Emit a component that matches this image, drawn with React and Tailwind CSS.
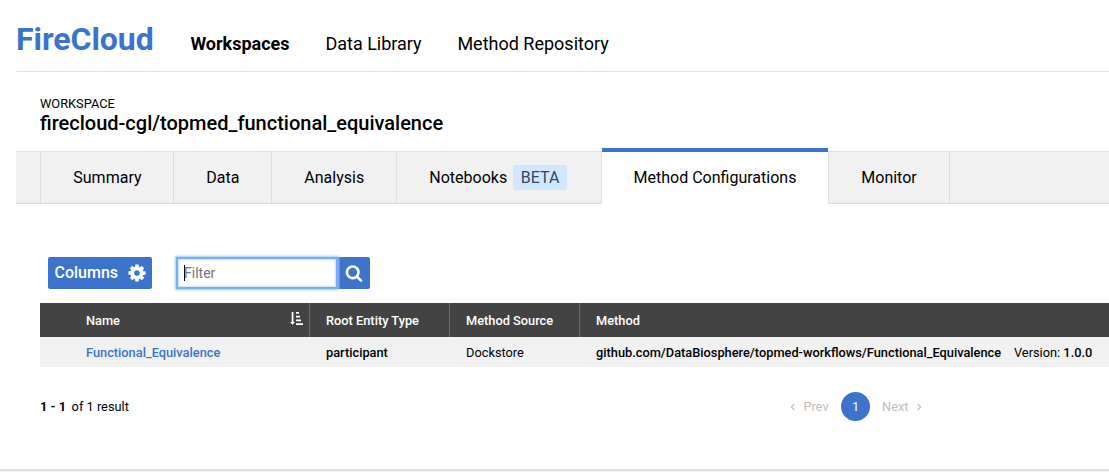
const tabs = [
  { label: "Summary", width: "w-[133px]" },
  { label: "Data", width: "w-[98px]" },
  { label: "Analysis", width: "w-[125px]" },
  { label: "Notebooks", width: "w-[205px]", beta: true },
  { label: "Method Configurations", width: "w-[226px]", active: true },
  { label: "Monitor", width: "w-[122px] border-l" },
];

function Tab({ label, width, beta, active }) {
  if (active) {
    return (
      <a className={`${width} -mt-[3px] h-[56px] shrink-0 border-t-4 border-[#3c74cc] bg-white pt-[14px] text-center leading-6`}>
        {label}
      </a>
    );
  }
  return (
    <a className={`${width} flex h-[53px] shrink-0 items-center border-y border-r border-[#dfdfdf] pl-[32.3px]`}>
      {label}
      {beta && <span className="ml-[5.7px] h-[25px] rounded-[3px] bg-[#cfe8ff] px-2 leading-[25px] text-[#33475f]">BETA</span>}
    </a>
  );
}

function CogIcon() {
  return (
    <svg viewBox="0 0 1792 1792" fill="currentColor" className="ml-[8.5px] size-5">
      <path d="M1152 896q0-106-75-181t-181-75-181 75-75 181 75 181 181 75 181-75 75-181zm512-109v222q0 12-8 23t-20 13l-185 28q-19 54-39 91 35 50 107 138 10 12 10 25t-9 23q-27 37-99 108t-94 71q-12 0-26-9l-138-108q-44 23-91 38-16 136-29 186-7 28-36 28h-222q-14 0-24.5-8.5t-11.5-21.5l-28-184q-49-16-90-37l-141 107q-10 9-25 9-14 0-25-11-126-114-165-168-7-10-7-23 0-12 8-23 15-21 51-66.5t54-70.5q-27-50-41-99l-183-27q-13-2-21-12.5t-8-23.5v-222q0-12 8-23t19-13l186-28q14-46 39-92-40-57-107-138-10-12-10-24 0-10 9-23 26-36 98.5-107.5t94.5-71.5q13 0 26 10l138 107q44-23 91-38 16-136 29-186 7-28 36-28h222q14 0 24.5 8.5t11.5 21.5l28 184q49 16 90 37l142-107q9-9 24-9 13 0 25 10 129 119 165 170 7 8 7 22 0 12-8 23-15 21-51 66.5t-54 70.5q26 50 41 98l183 28q13 2 21 12.5t8 23.5z" />
    </svg>
  );
}

function SearchIcon() {
  return (
    <svg viewBox="0 0 1792 1792" fill="currentColor" className="size-[18px]">
      <path d="M1216 832q0-185-131.5-316.5t-316.5-131.5-316.5 131.5-131.5 316.5 131.5 316.5 316.5 131.5 316.5-131.5 131.5-316.5zm512 832q0 52-38 90t-90 38q-54 0-90-38l-343-342q-179 124-399 124-143 0-273.5-55.5t-225-150-150-225-55.5-273.5 55.5-273.5 150-225 225-150 273.5-55.5 273.5 55.5 225 150 150 225 55.5 273.5q0 220-124 399l343 343q37 37 37 90z" />
    </svg>
  );
}

function SortIcon() {
  return (
    <svg width="13" height="13" viewBox="0 0 13 13" fill="#fff">
      <path d="M1.7 0h1.7v10H5L2.55 12.8.1 10h1.6zM6 0h3v1.8H6zM6 3.8h4v1.8H6zM6 7.5h5v1.8H6zM6 11.2h7V13H6z" />
    </svg>
  );
}

function Chevron({ left }) {
  return (
    <svg width="6" height="8" viewBox="0 0 6 8" fill="none" stroke="#bfbfbf" strokeWidth="1.2">
      <path d={left ? "M4.5 .8 1.3 4l3.2 3.2" : "M1.5 .8 4.7 4 1.5 7.2"} />
    </svg>
  );
}

export default function App() {
  return (
    <div className="flex h-[472px] w-[1109px] flex-col overflow-hidden bg-white font-['Roboto',sans-serif] text-base text-black">
      <header className="ml-4 flex h-[72px] shrink-0 items-start border-b border-[#dfdfdf] whitespace-nowrap">
        <span className="mt-[19px] w-[174.4px] text-[32px] leading-10 font-bold tracking-[-0.05px] text-[#3c74cc]">FireCloud</span>
        <nav className="mt-8 flex text-[18px] leading-6">
          <a className="w-[135px] font-bold">Workspaces</a>
          <a className="w-[132px]">Data Library</a>
          <a>Method Repository</a>
        </nav>
      </header>

      <section className="ml-10 h-[79px] shrink-0 pt-6">
        <div className="text-[12.8px] leading-4">WORKSPACE</div>
        <h1 className="-mt-px text-[20px] leading-6 font-medium">firecloud-cgl/topmed_functional_equivalence</h1>
      </section>

      <nav className="ml-4 flex h-[53px] shrink-0 bg-[#f1f1f1] whitespace-nowrap">
        <div className="w-[25px] border-y border-r border-[#dfdfdf]" />
        {tabs.map((t) => (
          <Tab key={t.label} {...t} />
        ))}
        <div className="flex-1 border-y border-[#dfdfdf]" />
      </nav>

      <div className="mt-[53px] ml-12 flex h-8 shrink-0">
        <button className="flex w-[104px] items-center rounded-[2px] bg-[#3c74cc] pl-[6.5px] font-medium text-white">
          Columns
          <CogIcon />
        </button>
        <div className="ml-6 flex">
          <div className="relative z-10 flex w-[162px] items-center border-2 border-[#76adf3] bg-white pl-[6px] text-[14px] text-[#757575] shadow-[0_0_2px_1px_#9fc9fa,inset_0_0_2px_1px_#c3ddfb]">
            <span className="h-4 w-px bg-black" />
            <span className="-ml-px">Filter</span>
          </div>
          <button className="flex w-8 items-center justify-center rounded-r-[2px] bg-[#3c74cc] text-white">
            <SearchIcon />
          </button>
        </div>
      </div>

      <div className="mt-[14px] ml-10 shrink-0 text-[12.8px] leading-[19px] whitespace-nowrap">
        <div className="flex h-[34px] items-center bg-[#434343] font-medium text-white">
          <div className="flex h-full w-[270px] items-start border-r border-[#6c6c6c] pt-2 pl-[46px]">
            Name
            <span className="mt-px mr-[6px] ml-auto"><SortIcon /></span>
          </div>
          <div className="h-full w-[140px] border-r border-[#6c6c6c] pt-2 pl-4">Root Entity Type</div>
          <div className="h-full w-[130px] border-r border-[#6c6c6c] pt-2 pl-4">Method Source</div>
          <div className="h-full pt-2 pl-4">Method</div>
        </div>
        <div className="flex h-[30px] items-start bg-[#f1f1f1] pt-[6px]">
          <div className="w-[270px] pl-[46px] font-medium text-[#3c74cc]">Functional_Equivalence</div>
          <div className="w-[140px] pl-4 font-medium">participant</div>
          <div className="w-[130px] pl-4">Dockstore</div>
          <div className="w-[434px] pl-4 font-medium">github.com/DataBiosphere/topmed-workflows/Functional_Equivalence</div>
          <div>Version: <span className="font-medium">1.0.0</span></div>
        </div>
      </div>

      <div className="mt-[25px] ml-10 flex h-[29px] shrink-0 items-center text-[12.8px] whitespace-nowrap">
        <div className="w-[750px]"><b className="mr-[5.5px]">1 - 1</b>of 1 result</div>
        <div className="flex items-center text-[#bfbfbf]">
          <Chevron left />
          <span className="ml-[7.5px] w-[37.5px]">Prev</span>
          <span className="flex size-[29px] items-center justify-center rounded-full bg-[#3c74cc] text-white">1</span>
          <span className="ml-3 w-[34px]">Next</span>
          <Chevron />
        </div>
      </div>

      <footer className="mt-auto h-[3px] shrink-0 border-t-2 border-[#dfdfdf] bg-[#f4f4f4]" />
    </div>
  );
}
